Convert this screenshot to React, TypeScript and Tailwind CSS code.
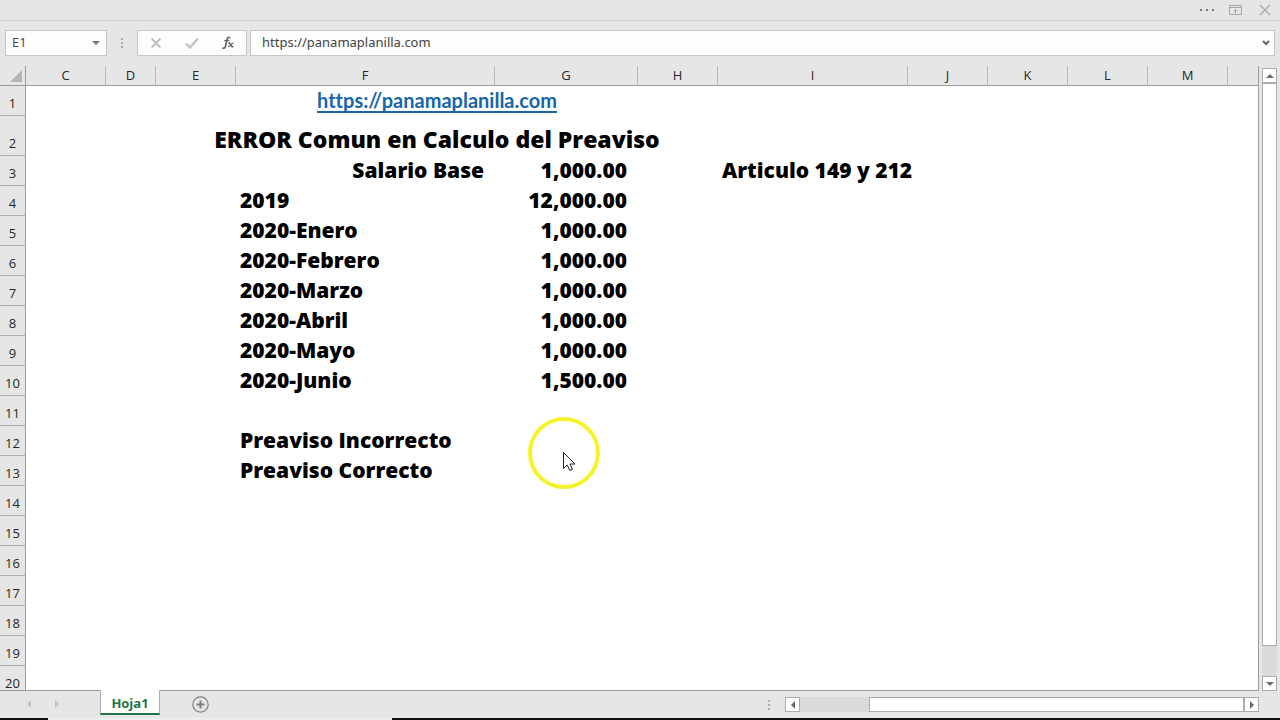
import React from "react";

const columns = [
  { name: "C", width: "w-[80px]" },
  { name: "D", width: "w-[50px]" },
  { name: "E", width: "w-[80px]" },
  { name: "F", width: "w-[259px]" },
  { name: "G", width: "w-[143px]" },
  { name: "H", width: "w-[80px]" },
  { name: "I", width: "w-[190px]" },
  { name: "J", width: "w-[80px]" },
  { name: "K", width: "w-[80px]" },
  { name: "L", width: "w-[80px]" },
  { name: "M", width: "w-[80px]" },
];

type Row = { label?: string; amount?: string; note?: string; right?: boolean };

const rows: Row[] = [
  { label: "Salario Base", amount: "1,000.00", note: "Articulo 149 y 212", right: true },
  { label: "2019", amount: "12,000.00" },
  { label: "2020-Enero", amount: "1,000.00" },
  { label: "2020-Febrero", amount: "1,000.00" },
  { label: "2020-Marzo", amount: "1,000.00" },
  { label: "2020-Abril", amount: "1,000.00" },
  { label: "2020-Mayo", amount: "1,000.00" },
  { label: "2020-Junio", amount: "1,500.00" },
  {},
  { label: "Preaviso Incorrecto" },
  { label: "Preaviso Correcto" },
  {},
  {},
  {},
  {},
  {},
  {},
  {},
];

function RowHeader({ n }: { n: number }) {
  return (
    <th
      scope="row"
      className="border-r border-b border-r-[#9b9b9b] border-b-[#b0b0b0] bg-[#e6e6e6] p-0 align-bottom text-[13px] leading-6 font-normal text-[#262626]"
    >
      {n}
    </th>
  );
}

function Triangle({ d, className = "text-[#6b6b6b]" }: { d: string; className?: string }) {
  return (
    <svg viewBox="0 0 8 8" className={`size-2 ${className}`} fill="currentColor" aria-hidden="true">
      <path d={d} />
    </svg>
  );
}

const UP = "M4 2 8 6H0z";
const DOWN = "M0 2h8L4 6z";
const LEFT = "M6 0v8L2 4z";
const RIGHT = "M2 0v8l4-4z";

function Grip() {
  return (
    <svg viewBox="0 0 2 10" className="h-2.5 w-0.5 shrink-0" fill="#adadad" aria-hidden="true">
      <path d="M0 0h2v2H0zM0 4h2v2H0zM0 8h2v2H0z" />
    </svg>
  );
}

function WindowBar() {
  return (
    <header className="flex h-[21px] shrink-0 items-center justify-end gap-3 border-b border-[#d2d2d2] bg-[#e6e6e6] pr-[9px] text-[#a6a6a6]">
      <button aria-label="Más opciones">
        <svg viewBox="0 0 18 4" className="h-1 w-[18px]" fill="#777">
          <path d="M1 1h2v2H1zM7 1h2v2H7zM13 1h2v2h-2z" />
        </svg>
      </button>
      <button aria-label="Opciones de la cinta">
        <svg viewBox="0 0 14 11" className="h-[11px] w-3.5" fill="none" stroke="currentColor">
          <path d="M.5.5h12v9H.5zM.5 2.500h12M6.500 8.500v-4M4.500 6.500l2-2 2 2" />
        </svg>
      </button>
      <button aria-label="Cerrar" className="ml-1">
        <svg viewBox="0 0 12 12" className="size-3" fill="none" stroke="currentColor" strokeWidth="1.2">
          <path d="m1 1 10 10M11 1 1 11" />
        </svg>
      </button>
    </header>
  );
}

function FormulaBar() {
  return (
    <div className="flex h-[45px] shrink-0 items-center px-[5px] pb-0.5">
      <div className="flex h-[26px] w-[102px] items-center border border-[#c6c6c6] bg-[#fdfdfd] pr-1.5">
        <input
          aria-label="Cuadro de nombres"
          defaultValue="E1"
          className="w-full min-w-0 flex-1 bg-transparent pl-1.5 text-[13px] text-[#444] outline-none"
        />
        <button aria-label="Elegir nombre">
          <Triangle d={DOWN} className="text-[#777]" />
        </button>
      </div>
      <div className="flex w-[30px] justify-center">
        <Grip />
      </div>
      <div className="flex h-[26px] w-[110px] items-center justify-around border border-[#c6c6c6] bg-[#fdfdfd]">
        <button aria-label="Cancelar">
          <svg viewBox="0 0 12 12" className="size-3" fill="none" stroke="#bcbcbc" strokeWidth="1.8">
            <path d="m1.500 1.500 9 9M10.500 1.500l-9 9" />
          </svg>
        </button>
        <button aria-label="Introducir">
          <svg viewBox="0 0 14 12" className="h-3 w-3.5" fill="none" stroke="#c2c2c2" strokeWidth="2.4">
            <path d="m1 6.500 4 4L13 1.500" />
          </svg>
        </button>
        <button aria-label="Insertar función">
          <svg viewBox="0 0 12 14" className="h-3.5 w-3" fill="none" stroke="#666">
            <path strokeWidth="1.7" d="M8 2C6.700.8 5.400 1.300 5 3.500L3.600 10C3.200 11.900 2 12.700.4 11.900" />
            <path strokeWidth="1.2" d="M2.300 4.700h5M11.600 7.200C10 6.900 8 10.900 6 10.700" />
            <path strokeWidth="1.600" d="M6.500 7.300c1.400-.5 1.900.2 2.400 1.700.4 1.500.9 2 2.500 1.600" />
          </svg>
        </button>
      </div>
      <div className="ml-[3px] flex h-[26px] flex-1 items-center border border-[#c6c6c6] bg-[#fdfdfd] pr-1">
        <input
          aria-label="Barra de fórmulas"
          defaultValue="https://panamaplanilla.com"
          className="min-w-0 flex-1 bg-transparent pl-[11px] font-['Noto_Sans',sans-serif] text-[13px] text-[#444] outline-none"
        />
        <button aria-label="Expandir barra de fórmulas">
          <svg viewBox="0 0 8 6" className="h-1.5 w-2" fill="none" stroke="#666" strokeWidth="2">
            <path d="m1 1 3 3 3-3" />
          </svg>
        </button>
      </div>
    </div>
  );
}

function Sheet() {
  return (
    <div className="min-w-0 flex-1 overflow-hidden border-r border-b border-[#9b9b9b] bg-white">
      <table className="w-full table-fixed border-separate border-spacing-0">
        <colgroup>
          <col className="w-[26px]" />
          {columns.map((c) => (
            <col key={c.name} className={c.width} />
          ))}
          <col />
        </colgroup>
        <thead>
          <tr className="h-5 bg-[#e6e6e6]">
            <th className="border-r border-b border-[#9b9b9b] p-0">
              <svg viewBox="0 0 12 12" className="mr-[3px] ml-auto size-3" fill="#b5b5b5" aria-hidden="true">
                <path d="M12 0v12H0z" />
              </svg>
            </th>
            {columns.map((c) => (
              <th
                key={c.name}
                scope="col"
                className="border-r border-b border-r-[#b8b8b8] border-b-[#9b9b9b] p-0 text-[13px] leading-[19px] font-normal text-[#262626]"
              >
                {c.name}
              </th>
            ))}
            <td className="border-b border-[#9b9b9b] p-0" />
          </tr>
        </thead>
        <tbody className="text-[21px] font-extrabold text-black">
          <tr className="h-[30px]">
            <RowHeader n={1} />
            <td colSpan={2} />
            <td
              colSpan={4}
              className="p-0 text-center align-top font-['Lato',sans-serif] text-xl leading-7 font-bold [font-variant-ligatures:none]"
            >
              <a href="https://panamaplanilla.com" className="text-[#1766ac] underline underline-offset-3">
                https://panamaplanilla.com
              </a>
            </td>
            <td colSpan={6} />
          </tr>
          <tr className="h-10">
            <RowHeader n={2} />
            <td colSpan={2} />
            <td colSpan={4} className="p-0 pt-1.5 text-center text-[23px] leading-8 whitespace-nowrap">
              ERROR Comun en Calculo del Preaviso
            </td>
            <td colSpan={6} />
          </tr>
          {rows.map((row, i) => (
            <tr key={i} className="h-[30px] align-top leading-7">
              <RowHeader n={i + 3} />
              <td colSpan={3} className="p-0" />
              <td className={row.right ? "p-0 pr-[11px] text-right" : "p-0 pl-1"}>{row.label}</td>
              <td className="p-0 pr-[11px] text-right">{row.amount}</td>
              <td className="p-0" />
              <td colSpan={2} className="p-0 pl-1">
                {row.note}
              </td>
              <td colSpan={4} className="p-0" />
            </tr>
          ))}
        </tbody>
      </table>
    </div>
  );
}

const scrollButton = "flex size-[15px] shrink-0 items-center justify-center border border-[#ababab] bg-white";

function VerticalScrollbar() {
  return (
    <div className="mt-0.5 mr-[3px] ml-[3px] flex w-[15px] shrink-0 flex-col bg-[#dadada]">
      <button aria-label="Desplazar arriba" className={scrollButton}>
        <Triangle d={UP} />
      </button>
      <div className="grow-[563] border border-[#ababab] bg-white" />
      <div className="grow-[30]" />
      <button aria-label="Desplazar abajo" className={scrollButton}>
        <Triangle d={DOWN} />
      </button>
    </div>
  );
}

function SheetTabs() {
  return (
    <footer className="flex h-[27px] shrink-0 items-start bg-[#e6e6e6]">
      <div className="flex h-[26px] w-[100px] items-center gap-5 pl-[25px]">
        <button aria-label="Hoja anterior">
          <Triangle d={LEFT} className="text-[#c3c3c3]" />
        </button>
        <button aria-label="Hoja siguiente">
          <Triangle d={RIGHT} className="text-[#c3c3c3]" />
        </button>
      </div>
      <button className="relative -mt-px h-[25px] w-[60px] border-x border-b-2 border-x-[#ababab] border-b-[#217346] bg-white pt-1 text-[13px] font-bold text-[#217346]">
        Hoja1
      </button>
      <button aria-label="Hoja nueva" className="mt-[5px] ml-8">
        <svg viewBox="0 0 17 17" className="size-[17px]" fill="none" stroke="#808080">
          <circle cx="8.500" cy="8.500" r="7.700" strokeWidth="1.2" />
          <path d="M8.500 4.500v8M4.500 8.500h8" strokeWidth="2" />
        </svg>
      </button>
      <div className="ml-auto flex w-[512px] items-center pt-1.5">
        <Grip />
        <div className="ml-[15px] flex h-[15px] flex-1 bg-[#dadada]">
          <button aria-label="Desplazar a la izquierda" className={scrollButton}>
            <Triangle d={LEFT} />
          </button>
          <div className="grow-[69]" />
          <div className="grow-[376] border border-[#ababab] bg-white" />
          <button aria-label="Desplazar a la derecha" className={scrollButton}>
            <Triangle d={RIGHT} />
          </button>
        </div>
        <div className="w-[21px]" />
      </div>
    </footer>
  );
}

function Pointer() {
  return (
    <svg
      viewBox="0 0 72 74"
      className="pointer-events-none absolute top-[416px] left-[528px] h-[74px] w-[72px]"
      fill="none"
      aria-hidden="true"
    >
      <circle cx="36" cy="37" r="34" stroke="#f5f22a" strokeWidth="4" />
      <path d="M35.500 36.500v16l3.700-3.500 2.600 5.600 2.700-1.200-2.500-5.400h5z" fill="white" stroke="#222" />
    </svg>
  );
}

export default function App() {
  return (
    <div className="relative flex h-screen flex-col overflow-hidden bg-[#e6e6e6] font-['Open_Sans',sans-serif]">
      <WindowBar />
      <FormulaBar />
      <main className="flex min-h-0 flex-1">
        <Sheet />
        <VerticalScrollbar />
      </main>
      <SheetTabs />
      <div className="flex h-0.5 shrink-0 bg-[#111]">
        <div className="ml-12 w-[344px] bg-[#eee]" />
      </div>
      <Pointer />
    </div>
  );
}
